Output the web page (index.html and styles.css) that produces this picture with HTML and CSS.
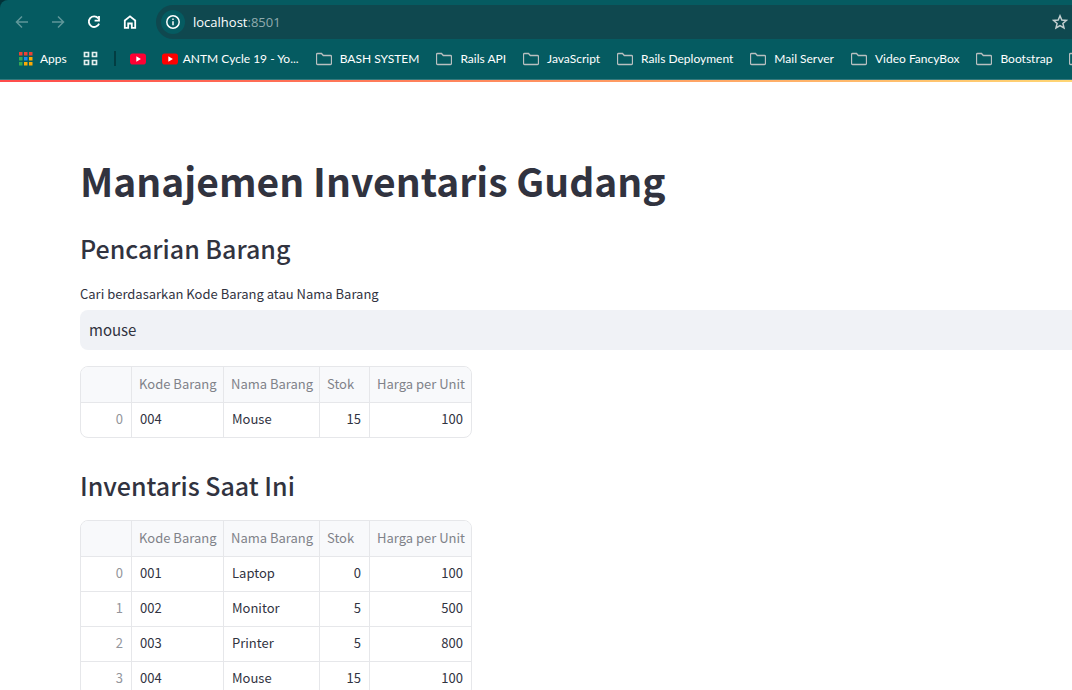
FILE: index.html
```html
<!DOCTYPE html>
<html lang="id">
<head>
<meta charset="utf-8">
<title>Manajemen Inventaris Gudang</title>
<link rel="stylesheet" href="styles.css">
</head>
<body>
<svg class="defs" aria-hidden="true">
  <symbol id="folder" viewBox="0 0 16 14"><path d="M1.500 1.500h4l1.800 2h7.200c.5 0 1 .4 1 1v7c0 .6-.5 1-1 1H1.500c-.6 0-1-.4-1-1v-9c0-.6.4-1 1-1z" fill="none" stroke="currentColor" stroke-width="1.300"/></symbol>
  <symbol id="play" viewBox="0 0 16 12"><rect y="0.500" width="16" height="11" rx="2.800" fill="currentColor"/><path d="M6.300 3.300v5.400l4.600-2.700z" fill="#fff"/></symbol>
</svg>
<header class="browser">
  <div class="frame">
  <div class="toolbar">
    <div class="nav">
      <button class="nav-btn dim" aria-label="Kembali"><svg viewBox="0 0 16 16"><path d="M14 8H3M8 2.500L2.500 8 8 13.500"/></svg></button>
      <button class="nav-btn dim" aria-label="Maju"><svg viewBox="0 0 16 16"><path d="M2 8h11M8 2.500L13.500 8 8 13.500"/></svg></button>
      <button class="nav-btn" aria-label="Muat ulang"><svg viewBox="0 0 16 16"><path class="bold" d="M12.300 4.400A5.300 5.300 0 1 0 13.100 9.600"/><path class="bold" d="M13 2v4.600H8.600"/></svg></button>
      <button class="nav-btn" aria-label="Beranda"><svg viewBox="0 0 16 16"><path class="bold" d="M2.800 6.500L8 2.300l5.200 4.200v7.300H9.800V9.500H6.200v4.300H2.800z"/></svg></button>
    </div>
    <div class="omnibox">
      <button class="info" aria-label="Informasi situs"><svg viewBox="0 0 16 16"><circle cx="8" cy="8" r="6.200"/><path d="M8 7.200v4M8 4.400v1.500"/></svg></button>
      <span class="url">localhost<span class="port">:8501</span></span>
      <button class="star" aria-label="Tambahkan bookmark"><svg viewBox="0 0 16 16"><path d="M8 1.800l1.800 4.200 4.600.4-3.500 3 1.100 4.500L8 11.500l-4 2.400 1.100-4.500-3.500-3 4.600-.4z"/></svg></button>
    </div>
  </div>
  <nav class="bookmarks">
    <a class="mark" href="#"><svg class="apps" viewBox="0 0 14 14"><path fill="#ea4335" d="M0 0h3.500v3.500H0zM5 0h3.500v3.500H5zM10 0h3.500v3.500H10z"/><path fill="#34a853" d="M0 5h3.500v3.500H0zM0 10h3.500v3.500H0z"/><path fill="#1a8cf0" d="M5 5h3.500v3.500H5z"/><path fill="#fbab05" d="M10 5h3.500v3.500H10zM5 10h3.500v3.500H5zM10 10h3.500v3.500H10z"/></svg>Apps</a>
    <a class="mark" href="#" aria-label="Grup tab"><svg class="tiles" viewBox="0 0 15 15"><path d="M1.500 1.500h4v4h-4zM9.500 1.500h4v4h-4zM1.500 9.500h4v4h-4zM9.500 9.500h4v4h-4z"/></svg></a>
    <span class="divider"></span>
    <a class="mark" href="#" aria-label="YouTube"><svg class="yt rose"><use href="#play"/></svg></a>
    <a class="mark" href="#"><svg class="yt"><use href="#play"/></svg>ANTM Cycle 19 - Yo...</a>
    <a class="mark folder" href="#"><svg><use href="#folder"/></svg>BASH SYSTEM</a>
    <a class="mark folder" href="#"><svg><use href="#folder"/></svg>Rails API</a>
    <a class="mark folder" href="#"><svg><use href="#folder"/></svg>JavaScript</a>
    <a class="mark folder" href="#"><svg><use href="#folder"/></svg>Rails Deployment</a>
    <a class="mark folder" href="#"><svg><use href="#folder"/></svg>Mail Server</a>
    <a class="mark folder" href="#"><svg><use href="#folder"/></svg>Video FancyBox</a>
    <a class="mark folder" href="#"><svg><use href="#folder"/></svg>Bootstrap</a>
    <a class="mark folder" href="#" aria-label="Folder"><svg><use href="#folder"/></svg></a>
  </nav>
  </div>
</header>
<div class="decoration"></div>
<main class="page">
  <h1>Manajemen Inventaris Gudang</h1>
  <section>
    <h2>Pencarian Barang</h2>
    <label class="label" for="search">Cari berdasarkan Kode Barang atau Nama Barang</label>
    <input class="search" id="search" type="text" value="mouse">
    <div class="grid">
      <table>
        <colgroup><col class="c-index"><col class="c-code"><col class="c-name"><col class="c-stock"><col class="c-price"></colgroup>
        <thead><tr><td></td><th>Kode Barang</th><th>Nama Barang</th><th>Stok</th><th>Harga per Unit</th></tr></thead>
        <tbody><tr><td class="index">0</td><td>004</td><td>Mouse</td><td class="num">15</td><td class="num">100</td></tr></tbody>
      </table>
    </div>
  </section>
  <section class="stock">
    <h2>Inventaris Saat Ini</h2>
    <div class="grid">
      <table>
        <colgroup><col class="c-index"><col class="c-code"><col class="c-name"><col class="c-stock"><col class="c-price"></colgroup>
        <thead><tr><td></td><th>Kode Barang</th><th>Nama Barang</th><th>Stok</th><th>Harga per Unit</th></tr></thead>
        <tbody>
          <tr><td class="index">0</td><td>001</td><td>Laptop</td><td class="num">0</td><td class="num">100</td></tr>
          <tr><td class="index">1</td><td>002</td><td>Monitor</td><td class="num">5</td><td class="num">500</td></tr>
          <tr><td class="index">2</td><td>003</td><td>Printer</td><td class="num">5</td><td class="num">800</td></tr>
          <tr><td class="index">3</td><td>004</td><td>Mouse</td><td class="num">15</td><td class="num">100</td></tr>
        </tbody>
      </table>
    </div>
  </section>
</main>
</body>
</html>
```
FILE: styles.css
```css
* { box-sizing: border-box; }
html, body { height: 100%; }
body {
  margin: 0;
  display: flex;
  flex-direction: column;
  overflow: hidden;
  background: #fff;
  color: #31333f;
  font-family: "Noto Sans CJK SC", "Noto Sans", sans-serif;
}
button { border: 0; padding: 0; background: none; color: inherit; display: flex; }
.defs { position: absolute; width: 0; height: 0; }

.browser { flex: none; background: #023238; color: #fff; }
.frame { background: #055b61; border-top-left-radius: 8px; border-bottom: 1px solid #36797d; }
.toolbar { display: flex; align-items: center; height: 44px; padding-left: 14px; }
.nav { display: flex; gap: 20px; width: 142px; }
.nav-btn svg, .info svg, .star svg { width: 16px; height: 16px; fill: none; stroke: currentColor; stroke-width: 1.5; }
.nav-btn svg .bold { stroke-width: 1.8; }
.dim { color: #5f9799; }
.omnibox {
  flex: 1;
  display: flex;
  align-items: center;
  height: 34px;
  padding-left: 5px;
  padding-right: 4px;
  border-radius: 17px 0 0 17px;
  background: #0f484f;
}
.info { width: 24px; height: 24px; border-radius: 12px; background: #055b61; align-items: center; justify-content: center; }
.url { flex: 1; margin-left: 8px; font-family: "Open Sans", sans-serif; font-size: 13px; }
.port { color: #8fabae; }
.star { color: #c4cfd0; }

.bookmarks { display: flex; align-items: center; gap: 16px; height: 35px; padding: 0 0 6px 19px; overflow: hidden; font-family: Lato, sans-serif; font-size: 12px; white-space: nowrap; }
.mark { flex: none; display: flex; align-items: center; gap: 5px; color: #fff; text-decoration: none; }
.folder { gap: 8px; margin-left: 1px; }
.folder svg { width: 16px; height: 14px; color: #b9bfc0; }
.apps { width: 14px; height: 14px; margin-right: 2px; }
.tiles { width: 15px; height: 15px; fill: none; stroke: #e4eeee; stroke-width: 1.7; }
.yt { width: 16px; height: 12px; color: #f00; }
.rose { color: #ff0033; }
.divider { flex: none; width: 2px; height: 15px; background: #023d42; margin-right: -2px; }

.decoration { flex: none; height: 2px; background: linear-gradient(90deg, #ff4b4b, #ffd674); }
.page { flex: 1; min-height: 0; padding: 73px 0 0 80px; }
h1, h2 { margin: 0; font-weight: 700; }
h1 { font-size: 39px; line-height: 51px; }
h2 { font-size: 25px; line-height: 32px; font-weight: 500; }
section { padding-top: 26px; }
.label { display: block; margin-top: 22px; font-size: 13px; line-height: 16px; }
.search {
  display: block;
  width: 100%;
  height: 40px;
  margin: 8px 0 16px;
  padding: 0 9px 1px;
  border: 0;
  border-radius: 8px 0 0 8px;
  background: #f0f2f6;
  color: inherit;
  font: inherit;
  font-size: 15px;
}
.stock { padding-top: 31px; }
.stock .grid { margin-top: 19px; }
.grid { width: max-content; border: 1px solid #e6e7ea; border-radius: 8px; overflow: hidden; font-size: 13px; line-height: 20px; }
table { width: 390px; table-layout: fixed; border-collapse: separate; border-spacing: 0; }
.c-index { width: 51px; }
.c-code { width: 92px; }
.c-name { width: 96px; }
.c-stock { width: 50px; }
.c-price { width: 101px; }
th, td { padding: 0 8px 2px; height: 35px; border-right: 1px solid #e6e7ea; border-bottom: 1px solid #e6e7ea; text-align: left; font-weight: 400; white-space: nowrap; }
thead th, thead td { height: 36px; padding: 0 7px 1px; background: #f8f9fb; color: #808289; }
tr > :last-child { border-right: 0; }
tbody tr:last-child td { border-bottom: 0; height: 34px; }
td.index { color: #93959b; text-align: right; }
td.num { text-align: right; }
```
